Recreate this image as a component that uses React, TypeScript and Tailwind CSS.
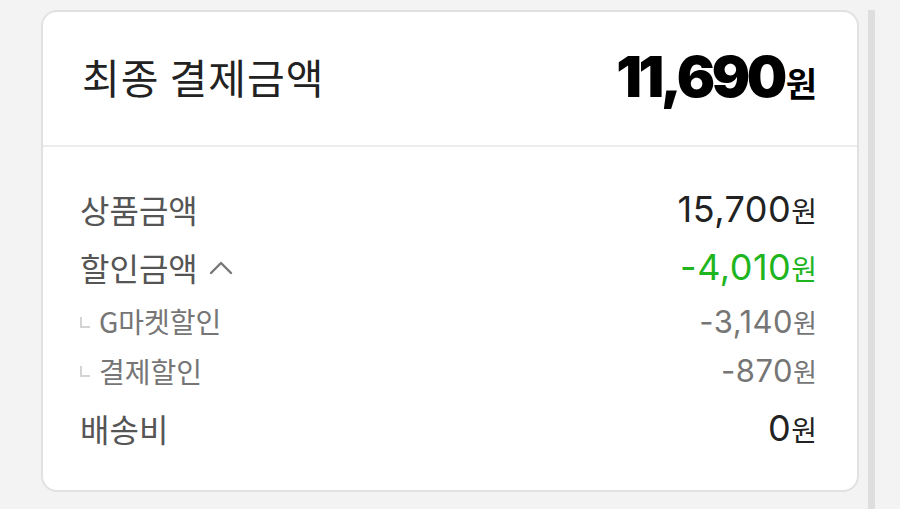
import React from 'react';

const kr = "font-['Noto_Sans_CJK_KR','Noto_Sans',sans-serif]";
const num = "font-['Inter','Noto_Sans_CJK_KR',sans-serif]";

interface RowProps {
    label: string;
    amount: string;
    sub?: boolean;
    green?: boolean;
    toggle?: boolean;
    className?: string;
}

const Row: React.FC<RowProps> = ({ label, amount, sub = false, green = false, toggle = false, className = '' }) => {
    const amountColor = green ? 'text-[#1fb51f]' : sub ? 'text-[#767676]' : 'text-[#222]';
    return (
        <div className={`flex items-center justify-between ${className}`}>
            <div className="flex items-center">
                {sub && (
                    <span className="mr-[9px] mt-[2px] h-[11px] w-[10px] border-b-2 border-l-2 border-[#d4d4d4]" />
                )}
                <span className={`${kr} ${sub ? 'text-[28px] text-[#767676]' : 'text-[32px] text-[#555]'} leading-none`}>
                    {label}
                </span>
                {toggle && (
                    <svg width="24" height="14" viewBox="0 0 24 14" className="ml-[11px] mt-[2px]" fill="none">
                        <path d="M2 12 L12 2 L22 12" stroke="#777" strokeWidth="2.4" strokeLinecap="round" strokeLinejoin="round" />
                    </svg>
                )}
            </div>
            <div className={`flex items-baseline ${amountColor}`}>
                <span className={`${num} ${sub ? 'text-[31px]' : 'text-[36px]'} font-normal leading-none tracking-[0.5px]`}>
                    {amount}
                </span>
                <span className={`${kr} ${sub ? 'text-[26px]' : 'text-[28px]'} leading-none`}>원</span>
            </div>
        </div>
    );
};

export default function App() {
    return (
        <div className="flex h-[509px] w-[900px] bg-[#f3f3f3] pl-[41px] pt-[10px]">
            <div className="h-[482px] w-[818px] overflow-hidden rounded-[16px] border-2 border-[#e1e1e1] bg-white">
                <div className="flex h-[133px] items-center justify-between pb-[4px] pl-[39px] pr-[40px]">
                    <span className={`${kr} text-[41px] leading-none tracking-[1px] text-[#222]`}>최종 결제금액</span>
                    <div className="flex items-baseline text-black">
                        <span className={`${num} text-[57px] font-black leading-none tracking-[-3.5px]`}>11,690</span>
                        <span className={`${kr} ml-[2px] text-[34px] font-bold leading-none`}>원</span>
                    </div>
                </div>
                <div className="h-[2px] bg-[#ececec]" />
                <div className="pl-[37px] pr-[40px] pt-[33px]">
                    <Row label="상품금액" amount="15,700" className="h-[58px]" />
                    <Row label="할인금액" amount="-4,010" green toggle className="h-[58px]" />
                    <Row label="G마켓할인" amount="-3,140" sub className="h-[50px]" />
                    <Row label="결제할인" amount="-870" sub className="h-[49px]" />
                    <Row label="배송비" amount="0" className="mt-[4px] h-[58px]" />
                </div>
            </div>
            <div className="ml-[9px] h-[499px] w-[7px] bg-[#dedede]" />
        </div>
    );
}
